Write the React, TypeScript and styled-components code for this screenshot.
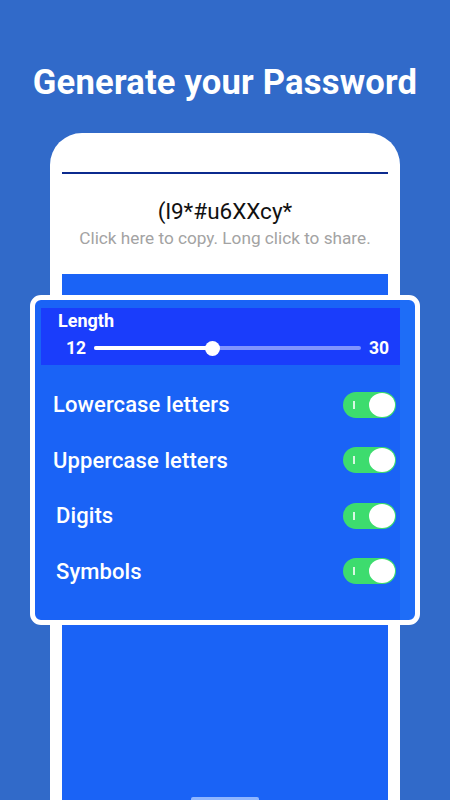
import * as React from 'react';
import styled, { createGlobalStyle } from 'styled-components';

const bg = '#316ac9';
const screenBlue = '#1a63f6';
const panelBlue = '#1a3dfb';
const navy = '#0b2a8e';
const green = '#3ddc6e';

const GlobalStyle = createGlobalStyle`
  html, body {
    margin: 0;
    padding: 0;
    background: ${bg};
  }
  * {
    box-sizing: border-box;
  }
`;

const Page = styled.div`
  position: relative;
  width: 450px;
  height: 800px;
  overflow: hidden;
  background: ${bg};
  font-family: Roboto, 'Noto Sans', 'Liberation Sans', sans-serif;
  display: flex;
  flex-direction: column;
`;

const Title = styled.h1`
  margin: 0;
  padding-top: 62px;
  font-size: 34.6px;
  line-height: 40px;
  font-weight: 700;
  color: #fff;
  text-align: center;
  letter-spacing: 0.2px;
`;

const Phone = styled.div`
  flex: 1;
  margin: 31px 50px 0;
  padding: 12px 12px 0;
  background: #fff;
  border-radius: 32px 32px 0 0;
  display: flex;
`;

const Screen = styled.div`
  flex: 1;
  display: flex;
  flex-direction: column;
  background: #fff;
`;

const Rule = styled.div`
  margin-top: 27px;
  height: 2px;
  background: ${navy};
`;

const PasswordText = styled.div`
  margin-top: 25px;
  font-size: 22.5px;
  line-height: 24px;
  color: #111;
  text-align: center;
`;

const Hint = styled.div`
  margin-top: 5px;
  font-size: 17.2px;
  line-height: 20px;
  color: #a3a3a3;
  text-align: center;
`;

const BlueArea = styled.div`
  flex: 1;
  margin-top: 26px;
  background: ${screenBlue};
  display: flex;
  flex-direction: column;
  align-items: center;
  justify-content: flex-end;
`;

const HomeBar = styled.div`
  width: 68px;
  height: 3px;
  border-radius: 2px 2px 0 0;
  background: #8fb6ff;
`;

const SettingsCard = styled.div`
  position: absolute;
  left: 30px;
  top: 295px;
  width: 390px;
  height: 330px;
  border: 5px solid #fff;
  border-radius: 11px;
  background: linear-gradient(to right, ${screenBlue} 0, ${screenBlue} 365px, #1e6df7 365px);
  display: flex;
  flex-direction: column;
`;

const LengthPanel = styled.div`
  margin: 8px 15px 0 6px;
  height: 57px;
  background: ${panelBlue};
  padding: 3px 11px 0 17px;
  color: #fff;
`;

const PanelLabel = styled.div`
  font-size: 18px;
  line-height: 20px;
  font-weight: 700;
`;

const SliderRow = styled.div`
  display: flex;
  align-items: center;
  margin-top: 6px;
  height: 22px;
  gap: 8px;
  padding-left: 8px;
`;

const Bound = styled.span`
  font-size: 17.5px;
  font-weight: 700;
  line-height: 22px;
`;

const Track = styled.div`
  position: relative;
  flex: 1;
  height: 4px;
  border-radius: 2px;
  background: rgba(255, 255, 255, 0.45);
`;

const Fill = styled.div`
  height: 100%;
  border-radius: 2px;
  background: #fff;
`;

const Thumb = styled.div`
  position: absolute;
  top: 50%;
  width: 15px;
  height: 15px;
  margin: -7.5px 0 0 -7.5px;
  border-radius: 50%;
  background: #fff;
`;

const Options = styled.div`
  margin-top: 12px;
  display: flex;
  flex-direction: column;
`;

const OptionRow = styled.div<{ $indent: number }>`
  height: 55.5px;
  display: flex;
  align-items: center;
  justify-content: space-between;
  padding: 0 19px 0 ${(p) => p.$indent}px;
`;

const OptionLabel = styled.span`
  font-size: 22px;
  font-weight: 500;
  color: #fff;
  letter-spacing: 0.1px;
`;

const Switch = styled.div`
  position: relative;
  width: 53px;
  height: 26px;
  border-radius: 13px;
  background: ${green};
  display: flex;
  align-items: center;
  justify-content: flex-end;
  padding-right: 1px;
`;

const SwitchMark = styled.div`
  position: absolute;
  left: 10px;
  top: 9px;
  width: 1.5px;
  height: 8px;
  background: rgba(255, 255, 255, 0.8);
`;

const Knob = styled.div`
  width: 26px;
  height: 24px;
  border-radius: 50%;
  background: #fff;
`;

const options = [
  { label: 'Lowercase letters', indent: 18 },
  { label: 'Uppercase letters', indent: 18 },
  { label: 'Digits', indent: 21 },
  { label: 'Symbols', indent: 21 },
];

const App: React.FC = () => {
  const min = 12;
  const max = 30;
  const value = 20;
  const pct = ((value - min) / (max - min)) * 100;

  return (
    <Page>
      <GlobalStyle />
      <Title>Generate your Password</Title>
      <Phone>
        <Screen>
          <Rule />
          <PasswordText>(l9*#u6XXcy*</PasswordText>
          <Hint>Click here to copy. Long click to share.</Hint>
          <BlueArea>
            <HomeBar />
          </BlueArea>
        </Screen>
      </Phone>
      <SettingsCard>
        <LengthPanel>
          <PanelLabel>Length</PanelLabel>
          <SliderRow>
            <Bound>{min}</Bound>
            <Track>
              <Fill style={{ width: `${pct}%` }} />
              <Thumb style={{ left: `${pct}%` }} />
            </Track>
            <Bound>{max}</Bound>
          </SliderRow>
        </LengthPanel>
        <Options>
          {options.map((o) => (
            <OptionRow key={o.label} $indent={o.indent}>
              <OptionLabel>{o.label}</OptionLabel>
              <Switch>
                <SwitchMark />
                <Knob />
              </Switch>
            </OptionRow>
          ))}
        </Options>
      </SettingsCard>
    </Page>
  );
};

export default App;
